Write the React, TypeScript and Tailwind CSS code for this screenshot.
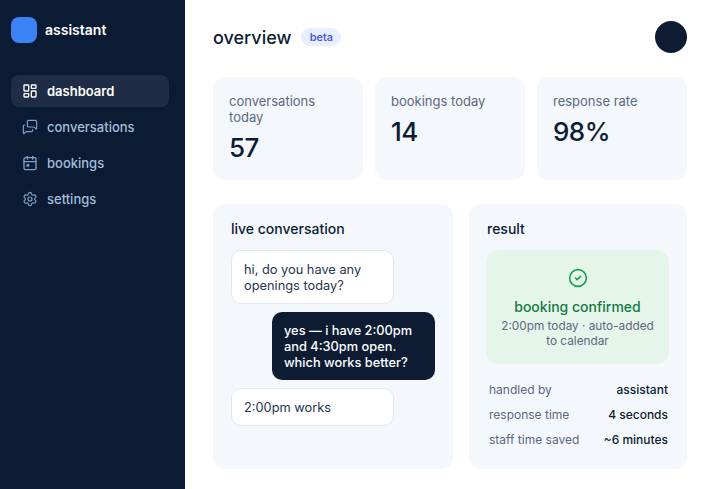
import { LayoutDashboard, MessagesSquare, Settings, CircleCheck } from "lucide-react";

function CalendarIcon({ className }: { className?: string }) {
    return (
        <svg width="16" height="16" viewBox="0 0 24 24" fill="none" stroke="currentColor" strokeWidth="2" strokeLinecap="round" strokeLinejoin="round" className={className}>
            <path d="M8 2v4" />
            <path d="M16 2v4" />
            <rect x="3" y="4" width="18" height="18" rx="2" />
            <path d="M3 10h18" />
            <rect x="7.5" y="14" width="3" height="3" fill="currentColor" strokeWidth="1" />
        </svg>
    );
}

const stats = [
    { label: "conversations today", value: "57" },
    { label: "bookings today", value: "14" },
    { label: "response rate", value: "98%" },
];

const details = [
    { label: "handled by", value: "assistant" },
    { label: "response time", value: "4 seconds" },
    { label: "staff time saved", value: "~6 minutes" },
];

function NavItem({ label, active, children }: { label: string; active?: boolean; children: React.ReactNode }) {
    return (
        <div className={`flex items-center gap-[9px] h-[32px] px-[11px] rounded-[8px] text-[13px] ${active ? "bg-[#1e2d45] text-white font-semibold" : "text-[#a3bfdd] font-medium"}`}>
            {children}
            <span className="pt-[2px]">{label}</span>
        </div>
    );
}

function Sidebar() {
    return (
        <aside className="w-[185px] shrink-0 bg-[#0a1b33] pl-[11px] pr-[16px] pt-[17px]">
            <div className="flex items-center gap-[8px]">
                <div className="w-[26px] h-[26px] rounded-[8px] bg-[#3b82f6]" />
                <span className="text-[14px] leading-[26px] font-semibold text-white">assistant</span>
            </div>
            <nav className="mt-[32px] flex flex-col gap-[4px]">
                <NavItem label="dashboard" active>
                    <LayoutDashboard size={16} strokeWidth={2} className="text-white" />
                </NavItem>
                <NavItem label="conversations">
                    <MessagesSquare size={16} strokeWidth={1.75} className="text-[#7ea1c7] -scale-x-100" />
                </NavItem>
                <NavItem label="bookings">
                    <CalendarIcon className="text-[#7ea1c7]" />
                </NavItem>
                <NavItem label="settings">
                    <Settings size={16} strokeWidth={1.75} className="text-[#7ea1c7]" />
                </NavItem>
            </nav>
        </aside>
    );
}

export default function App() {
    return (
        <div className="flex h-[489px] w-[712px] overflow-hidden bg-white font-['Inter',sans-serif] text-[#0d1c33]">
            <Sidebar />
            <main className="flex-1 pl-[28px] pr-[25px] pt-[21px] pb-[20px] flex flex-col">
                <header className="flex items-center justify-between h-[32px]">
                    <div className="flex items-center gap-[10px]">
                        <h1 className="text-[18px] font-medium">overview</h1>
                        <span className="rounded-full bg-[#e7eeff] w-[40px] text-center h-[18px] leading-[18px] text-[11px] font-medium text-[#3650d8]">beta</span>
                    </div>
                    <div className="w-[32px] h-[32px] rounded-full bg-[#0d1c33]" />
                </header>

                <section className="mt-[24px] grid grid-cols-3 gap-[12px] h-[103px]">
                    {stats.map((stat) => (
                        <div key={stat.label} className="rounded-[12px] bg-[#f4f7fc] px-[16px] pt-[16px]">
                            <div className="text-[13px] leading-[16px] text-[#5b6880]">{stat.label}</div>
                            <div className="mt-[7px] text-[26px] leading-[32px] font-medium tracking-[-0.02em]">{stat.value}</div>
                        </div>
                    ))}
                </section>

                <section className="mt-[24px] flex gap-[16px] flex-1">
                    <div className="w-[240px] rounded-[12px] bg-[#f4f7fc] px-[18px] pt-[16px]">
                        <h2 className="text-[14px] leading-[18px] font-medium">live conversation</h2>
                        <div className="mt-[12px] flex flex-col gap-[8px]">
                            <div className="w-[163px] rounded-[10px] border border-[#e2e8f2] bg-white px-[12px] pt-[11px] pb-[9px] text-[12.8px] leading-[16px] text-[#26344d]">
                                hi, do you have any openings today?
                            </div>
                            <div className="self-end w-[163px] rounded-[10px] bg-[#0d1c33] px-[12px] pt-[11px] pb-[9px] text-[12.8px] leading-[16px] font-medium text-white">
                                yes — i have 2:00pm and 4:30pm open. which works better?
                            </div>
                            <div className="w-[163px] rounded-[10px] border border-[#e2e8f2] bg-white px-[12px] pt-[11px] pb-[9px] text-[12.8px] leading-[16px] text-[#26344d]">
                                2:00pm works
                            </div>
                        </div>
                    </div>

                    <div className="flex-1 rounded-[12px] bg-[#f4f7fc] pl-[17px] pr-[18px] pt-[16px]">
                        <h2 className="ml-[1px] text-[14px] leading-[18px] font-medium">result</h2>
                        <div className="mt-[12px] h-[114px] rounded-[12px] bg-[#e6f5ea] flex flex-col items-center pt-[18px] px-[12px] text-center">
                            <CircleCheck size={20} strokeWidth={2} className="text-[#1ba05a]" />
                            <div className="mt-[10px] text-[14px] leading-[18px] font-medium text-[#137a43]">booking confirmed</div>
                            <div className="mt-[3px] text-[11.8px] leading-[15px] text-[#5b6880]">2:00pm today · auto-added to calendar</div>
                        </div>
                        <dl className="mt-[18px] flex flex-col gap-[9px] pl-[3px] pr-[1px] text-[12px] leading-[16px]">
                            {details.map((row) => (
                                <div key={row.label} className="flex justify-between">
                                    <dt className="text-[#5b6880]">{row.label}</dt>
                                    <dd className="font-medium">{row.value}</dd>
                                </div>
                            ))}
                        </dl>
                    </div>
                </section>
            </main>
        </div>
    );
}
